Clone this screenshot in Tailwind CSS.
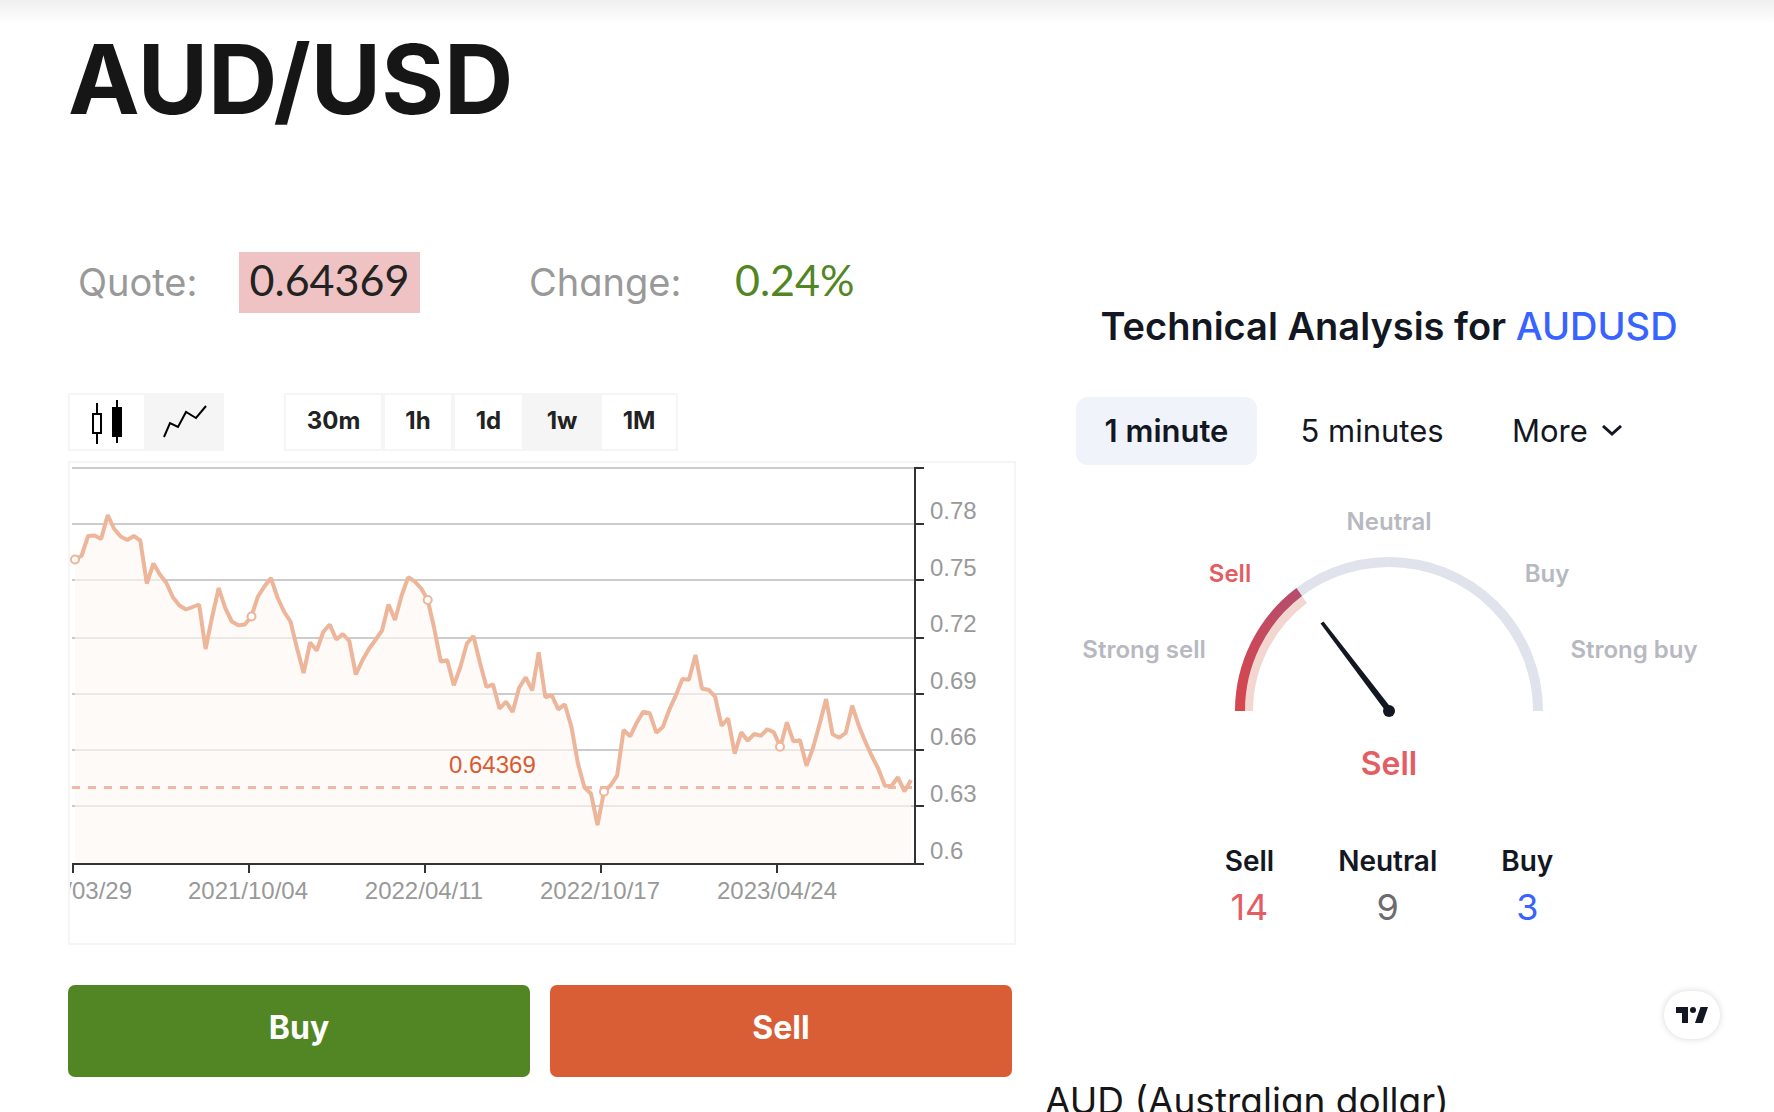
<!DOCTYPE html>
<html lang="en">
<head>
<meta charset="utf-8">
<meta name="viewport" content="width=device-width, initial-scale=1">
<title>AUD/USD</title>
<script src="https://cdn.jsdelivr.net/npm/@tailwindcss/browser@4"></script>
</head>
<body class="bg-white font-['Inter',sans-serif] text-[#161616]">
<div class="relative h-screen overflow-hidden">
  <div class="h-6 bg-linear-to-b from-[#efefef] to-white"></div>
  <main class="grid grid-cols-[948fr_688fr] gap-x-[29px] pl-[68px] pr-[41px]">
    <h1 class="col-span-2 pb-[2px] text-[96px] font-bold leading-[110px]">AUD/USD</h1>

    <section class="pt-[116px]">
      <dl class="flex h-[61px] items-baseline pl-[10px] text-[38px] leading-[56px]">
        <dt class="w-[161px] text-[#999]">Quote:</dt>
        <dd class="w-[181px] bg-[#efc2c3] pb-[5px] text-center font-['Lato',sans-serif] text-[43px] text-[#222]">0.64369</dd>
        <dt class="ml-[109px] w-[206px] text-[#999] [font-feature-settings:'cv11']">Change:</dt>
        <dd class="font-['Lato',sans-serif] text-[43px] text-[#528624]">0.24%</dd>
      </dl>

      <div class="mt-20 flex gap-[60px]">
        <div class="flex h-[58px] border-2 border-[#f5f5f5]">
          <button type="button" aria-label="Candles" class="flex w-[74px] items-center justify-center">
            <svg class="h-[54px] w-[74px]" viewBox="0 0 74 54" fill="none" stroke="#000" stroke-width="2"><path d="M27 8v11M27 38v11M23 19h8v19H23z"/><path d="M47 5v43"/><path d="M42 12h10v30H42z" fill="#000" stroke="none"/></svg>
          </button>
          <button type="button" aria-label="Line" aria-pressed="true" class="flex w-[78px] items-center justify-center bg-[#f5f5f5]">
            <svg class="h-[54px] w-[78px]" viewBox="0 0 78 54" fill="none" stroke="#000" stroke-width="2"><path d="M20 42l6-14 8 4 8-15 10 6 10-12"/></svg>
          </button>
        </div>
        <div class="flex h-[58px] text-[24px] font-bold text-[#222]">
          <button type="button" class="w-[99px] border-2 border-[#f5f5f5] pb-[2px]">30m</button>
          <button type="button" class="w-[70px] border-2 border-[#f5f5f5] pb-[2px]">1h</button>
          <button type="button" class="w-[71px] border-2 border-[#f5f5f5] pb-[2px]">1d</button>
          <button type="button" aria-pressed="true" class="w-[76px] border-2 border-[#f5f5f5] bg-[#f5f5f5] pb-[2px]">1w</button>
          <button type="button" class="w-[78px] border-2 border-[#f5f5f5] pb-[2px]">1M</button>
        </div>
      </div>

      <div class="mt-[10px] border-2 border-[#f5f5f5]">
        <svg class="block w-full" viewBox="70 463 944 480" font-family="'Liberation Sans', Arial, sans-serif" font-size="24" role="img" aria-label="AUD/USD weekly chart">
          <path stroke="#ccc" stroke-width="2" d="M72 468H915M72 524H915M72 580H915M72 638H915M72 694H915M72 750H915M72 806H915"/>
          <path id="area" fill="#fcf7f4" fill-opacity=".65"/>
          <path stroke="#f0b9a2" stroke-width="3" stroke-dasharray="8 8" d="M72 787.500H912"/>
          <path id="line" fill="none" stroke="#edb59a" stroke-width="4" stroke-linejoin="bevel"/>
          <g fill="#fff" stroke="#edb59a" stroke-width="2"><circle cx="75" cy="559.500" r="4"/><circle cx="251.500" cy="616.500" r="4"/><circle cx="427.700" cy="600" r="4"/><circle cx="604" cy="791.700" r="4"/><circle cx="780" cy="746.700" r="4"/></g>
          <path fill="none" stroke="#333" stroke-width="2" d="M915 467V864M72 864H924M915 468H924M915 524H924M915 580H924M915 638H924M915 694H924M915 750H924M915 806H924M73 864V873M249 864V873M425 864V873M601 864V873M777 864V873"/>
          <g fill="#999">
            <text x="930" y="463">0.81</text><text x="930" y="519">0.78</text><text x="930" y="576">0.75</text><text x="930" y="632">0.72</text><text x="930" y="689">0.69</text><text x="930" y="745">0.66</text><text x="930" y="802">0.63</text><text x="930" y="859">0.6</text>
          </g>
          <g fill="#999" text-anchor="middle">
            <text x="72" y="899">2021/03/29</text><text x="248" y="899">2021/10/04</text><text x="424" y="899">2022/04/11</text><text x="600" y="899">2022/10/17</text><text x="777" y="899">2023/04/24</text>
          </g>
          <text x="449" y="773" fill="#d95b32">0.64369</text>
        </svg>
      </div>

      <div class="mt-10 mr-1 grid grid-cols-2 gap-5 text-[32px] font-bold text-white">
        <button type="button" class="h-[92px] rounded-[7px] bg-[#528624] pb-[6px]">Buy</button>
        <button type="button" class="h-[92px] rounded-[7px] bg-[#d95e36] pb-[6px]">Sell</button>
      </div>
    </section>

    <section class="pt-[164px] text-[#131722]">
      <h2 class="text-center text-[38px] font-semibold leading-[52px]">Technical Analysis for <a href="#" class="font-medium text-[#3963ff]">AUDUSD</a></h2>
      <div class="ml-[31px] mt-[45px] flex h-[68px] text-[31px]">
        <button type="button" aria-pressed="true" class="w-[181px] rounded-xl bg-[#f0f3fa] font-semibold">1 minute</button>
        <button type="button" class="ml-[18px] w-[194px]">5 minutes</button>
        <button type="button" class="ml-[43px] flex items-center gap-[14px]">More
          <svg class="h-3 w-5" viewBox="0 0 20 12" fill="none" stroke="currentColor" stroke-width="3"><path d="M1 1L10 9 19 1"/></svg>
        </button>
      </div>
      <svg class="mt-[25px] block w-full" viewBox="1045 490 688 310" font-family="Inter, sans-serif" font-size="24" font-weight="600" text-anchor="middle" role="img" aria-label="Gauge: Sell">
        <defs><linearGradient id="sell" x1="0" y1="1" x2="1" y2="0"><stop offset="0" stop-color="#d8464c"/><stop offset="1" stop-color="#b34e70"/></linearGradient></defs>
        <path fill="none" stroke="#e0e3eb" stroke-width="10" d="M1240 711A149 149 0 0 1 1538 711"/>
        <path fill="#f1d7d0" d="M1245 711A144 144 0 0 1 1302 596L1307 603A136 136 0 0 0 1253 711Z"/>
        <path fill="url(#sell)" d="M1235 711A154 154 0 0 1 1296.500 588L1302 596A144 144 0 0 0 1245 711Z"/>
        <path fill="#131722" d="M1320.500 623.500L1323.500 621.500 1392 709 1387 713Z"/><circle cx="1389" cy="711" r="6" fill="#131722"/>
        <g fill="#b7b9c1"><text x="1389" y="530">Neutral</text><text x="1547" y="582">Buy</text><text x="1144" y="658">Strong sell</text><text x="1634" y="658">Strong buy</text></g>
        <text x="1230" y="582" fill="#e35d63">Sell</text>
        <text x="1389" y="775" fill="#e35d63" font-size="32">Sell</text>
      </svg>
      <dl class="mt-[41px] flex justify-center gap-[64px] text-center">
        <div><dt class="text-[28px] font-semibold leading-10">Sell</dt><dd class="text-[36px] leading-[52px] text-[#e35d63]">14</dd></div>
        <div><dt class="text-[28px] font-semibold leading-10">Neutral</dt><dd class="text-[36px] leading-[52px] text-[#6c6c70]">9</dd></div>
        <div><dt class="text-[28px] font-semibold leading-10">Buy</dt><dd class="text-[36px] leading-[52px] text-[#3963ff]">3</dd></div>
      </dl>
      <div class="mr-[13px] mt-[58px] flex justify-end">
        <a href="#" aria-label="TradingView" class="flex h-12 w-14 items-center justify-center rounded-full bg-white shadow-[0_0_7px_rgba(0,0,0,0.16)]">
          <svg class="h-4 w-8" viewBox="0 0 32 16" fill="#131722"><path d="M0 0h12v16H6V6H0zM24.500 0H32l-5.500 16H19z"/><circle cx="17" cy="3" r="3"/></svg>
        </a>
      </div>
      <p class="mt-[39px] text-[37px] leading-[46px] text-[#161616] [font-feature-settings:'cv11']">AUD (Australian dollar)</p>
    </section>
  </main>
</div>
<script>
  // Weekly closes as chart heights, evenly spaced from x = 75 to x = 911
  const closes = [559, 556, 536, 535.5, 539, 515, 529, 536.5, 540, 536, 540.5, 583.5, 563.5, 574.5, 583, 597.5, 605.5, 609.5, 607, 604.5, 649, 616.5, 588, 608, 621.5, 625.3, 624.5, 616.5, 596.5, 586.5, 578, 597.5, 611.5, 621.5, 648.5, 673, 642.5, 650.5, 632, 624.5, 639.5, 634, 641, 674.5, 660.3, 649, 640, 630.5, 604.5, 620, 595.5, 577.3, 581.3, 588.5, 599.7, 628.3, 661.5, 660.3, 685.3, 667.3, 643.5, 636, 662.5, 687, 684.3, 708.7, 701.7, 712, 687.7, 677.3, 690.3, 652.3, 697.3, 695.3, 709.3, 704.3, 726.7, 763.3, 787.3, 793.7, 825, 791.7, 785.3, 775.7, 730, 736.3, 722.7, 711.7, 713.3, 732.7, 727, 709.7, 695.3, 679, 679.7, 655, 688.7, 689.7, 696.7, 725.7, 718.3, 753.7, 732.3, 740.7, 734, 735.7, 729.3, 732.3, 746.7, 722.3, 741.3, 740.3, 765.7, 748, 724, 699, 734.3, 737.7, 733, 705.7, 725.7, 741.7, 756, 768.7, 785.7, 786, 777.3, 791.3, 780];
  const step = (911 - 75) / (closes.length - 1);
  const line = 'M' + closes.map((y, i) => (75 + i * step).toFixed(1) + ' ' + y).join('L');
  document.getElementById('line').setAttribute('d', line);
  document.getElementById('area').setAttribute('d', line + 'V864H75Z');
</script>
</body>
</html>
